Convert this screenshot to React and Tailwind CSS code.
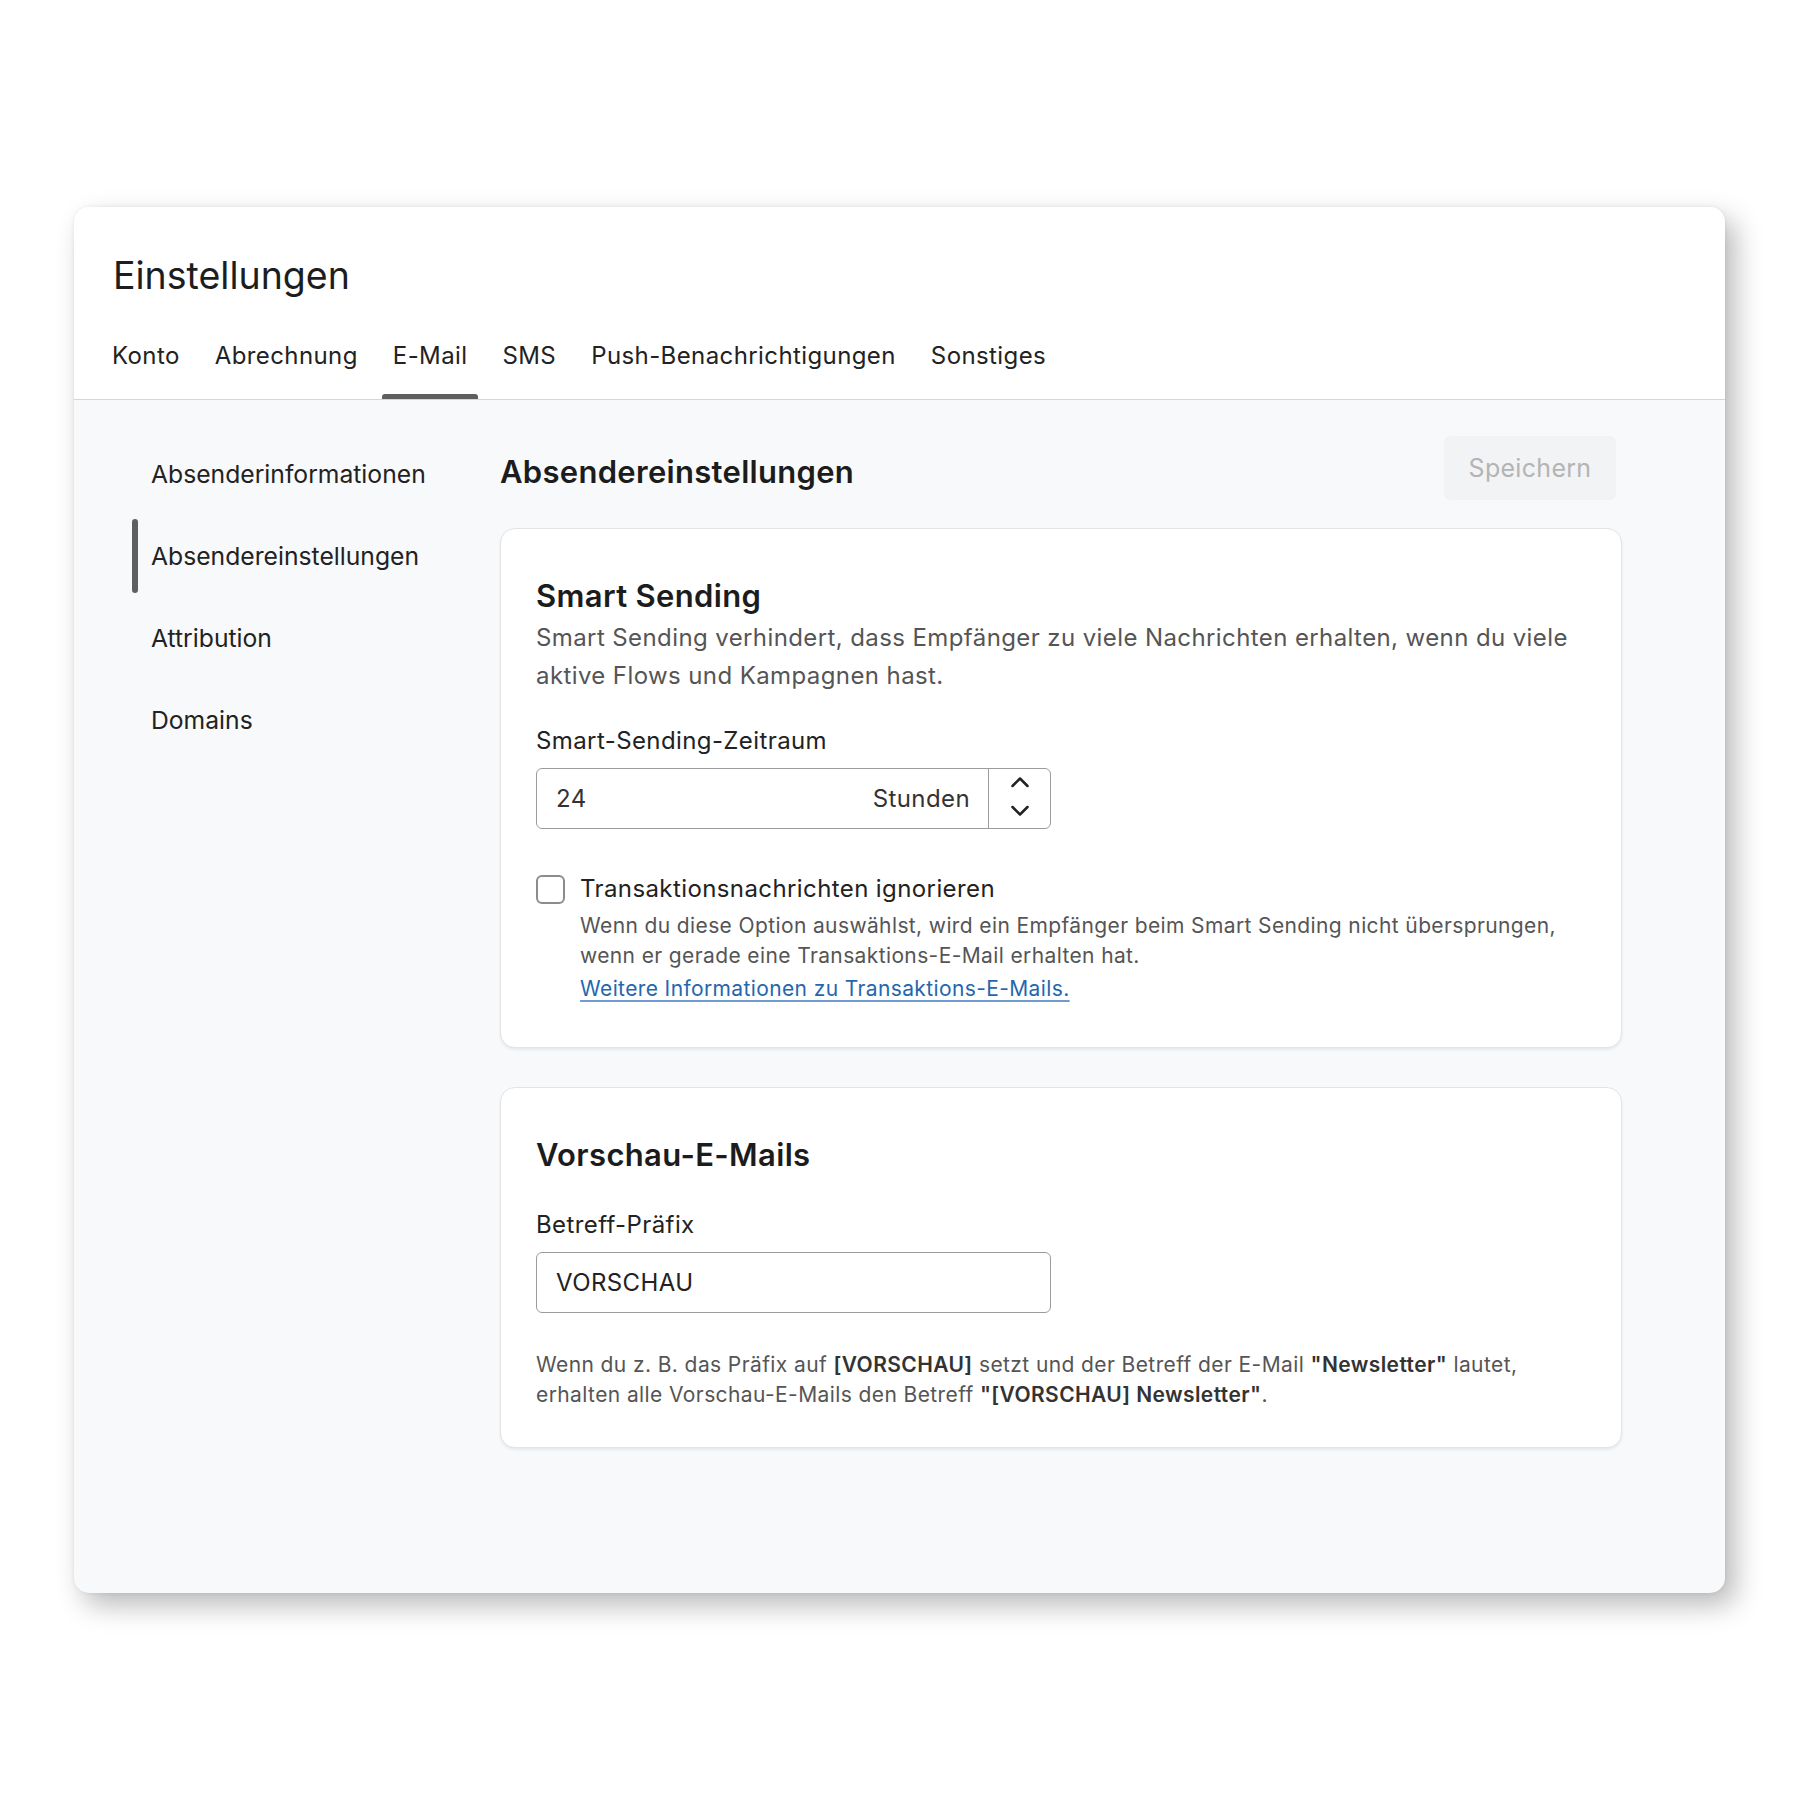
import { useState } from "react";

const TABS = ["Konto", "Abrechnung", "E-Mail", "SMS", "Push-Benachrichtigungen", "Sonstiges"];
const SIDE_ITEMS = ["Absenderinformationen", "Absendereinstellungen", "Attribution", "Domains"];

const Chevrons = () => (
  <svg
    width="22"
    height="41"
    viewBox="0 0 22 41"
    fill="none"
    stroke="#222"
    strokeWidth="2.5"
    strokeLinecap="round"
    strokeLinejoin="round"
  >
    <polyline points="3.5,10 11,2.5 18.5,10" />
    <polyline points="3.5,31 11,38.5 18.5,31" />
  </svg>
);

const App = () => {
  const [activeTab, setActiveTab] = useState("E-Mail");
  const [activeSide, setActiveSide] = useState("Absendereinstellungen");
  const [hours, setHours] = useState("24");
  const [ignore, setIgnore] = useState(false);
  const [prefix, setPrefix] = useState("VORSCHAU");

  return (
    <div className="min-h-[1800px] bg-white pt-[207px] pl-[74px] font-['Inter',sans-serif]">
      <div className="w-[1651px] h-[1386px] rounded-[15px] overflow-hidden bg-[#f8f9fa] shadow-[0_0_4px_rgba(0,0,0,0.07),10px_12px_28px_rgba(0,0,0,0.28)]">
        {/* header */}
        <div className="bg-white border-b border-[#d5d6d8] px-[39px] pt-[46px]">
          <h1 className="text-[37.5px] leading-[46px] text-[#1d1d1d]">Einstellungen</h1>
          <div className="flex gap-[13px] -ml-[12px] mt-[42px]">
            {TABS.map((t) => (
              <button
                key={t}
                onClick={() => setActiveTab(t)}
                className="relative px-[11px] pb-[28px] text-[24px] leading-[30px] tracking-[0.4px] text-[#222]"
              >
                {t}
                {activeTab === t && (
                  <span className="absolute left-0 right-0 bottom-0 h-[5px] rounded-t-[3px] bg-[#5e5f61]" />
                )}
              </button>
            ))}
          </div>
        </div>

        {/* body */}
        <div className="flex pt-[36px] pl-[58px] pr-[103px]">
          <nav className="w-[300px] mt-[1px] flex flex-col gap-2 shrink-0">
            {SIDE_ITEMS.map((item) => (
              <button
                key={item}
                onClick={() => setActiveSide(item)}
                className="relative h-[74px] flex items-center pl-[19px] text-left text-[24.7px] leading-[30px] text-[#222]"
              >
                {activeSide === item && (
                  <span className="absolute left-0 top-0 bottom-0 w-[6px] rounded-full bg-[#5e5f61]" />
                )}
                {item}
              </button>
            ))}
          </nav>

          <main className="ml-[68px] flex-1 min-w-0">
            <div className="flex justify-between items-start">
              <h2 className="mt-[18px] text-[31px] leading-[36px] tracking-[0.3px] font-semibold text-[#1c1c1c]">
                Absendereinstellungen
              </h2>
              <button className="mr-[6px] h-[64px] w-[172px] rounded-[6px] bg-[#f2f3f5] text-[25px] leading-[30px] tracking-[0.3px] text-[#b2b4b6]">
                Speichern
              </button>
            </div>

            {/* Smart Sending */}
            <section className="mt-[28px] bg-white border border-[#e3e4e6] rounded-[15px] shadow-[0_2px_3px_rgba(0,0,0,0.07)] px-[35px] pt-[49px] pb-[43px]">
              <h3 className="text-[31px] leading-[36px] tracking-[0.35px] font-semibold text-[#1c1c1c]">
                Smart Sending
              </h3>
              <p className="mt-[5px] text-[24px] leading-[38px] tracking-[0.4px] text-[#555]">
                Smart Sending verhindert, dass Empfänger zu viele Nachrichten erhalten, wenn du viele aktive
                Flows und Kampagnen hast.
              </p>
              <label className="block mt-[31px] text-[24px] leading-[30px] tracking-[0.4px] text-[#222]">
                Smart-Sending-Zeitraum
              </label>
              <div className="mt-[12px] flex h-[61px] w-[515px] border border-[#9c9c9c] rounded-[6px] bg-white">
                <div className="flex-1 min-w-0 flex items-center pl-[19px] pr-[18px]">
                  <input
                    value={hours}
                    onChange={(e) => setHours(e.target.value)}
                    className="flex-1 min-w-0 w-0 bg-transparent outline-none text-[24px] leading-[30px] tracking-[0.4px] text-[#333]"
                  />
                  <span className="text-[24px] leading-[30px] tracking-[0.4px] text-[#333]">Stunden</span>
                </div>
                <div className="w-[62px] shrink-0 border-l border-[#9c9c9c] flex items-center justify-center">
                  <div className="-mt-[4px]">
                    <Chevrons />
                  </div>
                </div>
              </div>

              <div className="mt-[45px] flex items-start gap-[15px]">
                <input
                  type="checkbox"
                  checked={ignore}
                  onChange={(e) => setIgnore(e.target.checked)}
                  className="appearance-none mt-[1px] w-[29px] h-[29px] shrink-0 border-2 border-[#8c8c8c] rounded-[6px] bg-white"
                />
                <div>
                  <div className="text-[24px] leading-[30px] tracking-[0.4px] text-[#222]">
                    Transaktionsnachrichten ignorieren
                  </div>
                  <p className="mt-[7px] text-[21px] leading-[30px] tracking-[0.38px] text-[#555]">
                    Wenn du diese Option auswählst, wird ein Empfänger beim Smart Sending nicht übersprungen,
                    wenn er gerade eine Transaktions-E-Mail erhalten hat.
                  </p>
                  <a
                    href="#"
                    className="inline-block mt-[3px] text-[21px] leading-[30px] tracking-[0.38px] text-[#2467ad] underline decoration-[#6f9bcf] decoration-[1.5px] underline-offset-[4px]"
                  >
                    Weitere Informationen zu Transaktions-E-Mails.
                  </a>
                </div>
              </div>
            </section>

            {/* Vorschau */}
            <section className="mt-[39px] bg-white border border-[#e3e4e6] rounded-[15px] shadow-[0_2px_3px_rgba(0,0,0,0.07)] px-[35px] pt-[49px] pb-[38px]">
              <h3 className="text-[31px] leading-[36px] tracking-[0.35px] font-semibold text-[#1c1c1c]">
                Vorschau-E-Mails
              </h3>
              <label className="block mt-[37px] text-[24px] leading-[30px] tracking-[0.4px] text-[#222]">
                Betreff-Präfix
              </label>
              <div className="mt-[12px] flex items-center h-[61px] w-[515px] border border-[#9c9c9c] rounded-[6px] bg-white px-[19px]">
                <input
                  value={prefix}
                  onChange={(e) => setPrefix(e.target.value)}
                  className="w-full bg-transparent outline-none text-[24px] leading-[30px] tracking-[0.4px] text-[#222]"
                />
              </div>
              <p className="mt-[37px] text-[21px] leading-[29.5px] tracking-[0.4px] text-[#555]">
                Wenn du z. B. das Präfix auf <span className="font-semibold text-[#333]">[VORSCHAU]</span> setzt
                und der Betreff der E-Mail <span className="font-semibold text-[#333]">"Newsletter"</span> lautet,
                erhalten alle Vorschau-E-Mails den Betreff{" "}
                <span className="font-semibold text-[#333]">"[VORSCHAU] Newsletter"</span>.
              </p>
            </section>
          </main>
        </div>
      </div>
    </div>
  );
};

export default App;
